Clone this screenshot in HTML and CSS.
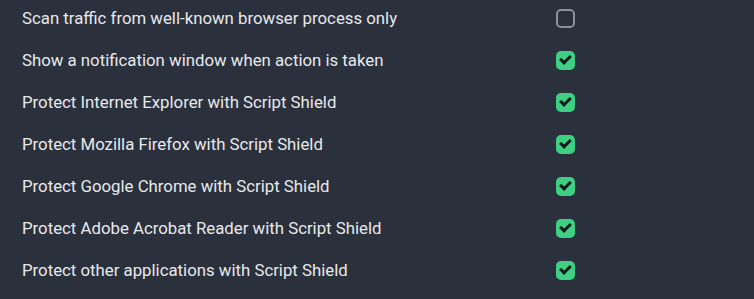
FILE: index.html
```html
<!DOCTYPE html>
<html lang="en">
<head>
    <meta charset="UTF-8">
    <title>Script Shield Settings</title>
    <link rel="stylesheet" href="styles.css">
</head>
<body>
    <ul class="options">
        <li class="option">
            <span class="label">Scan traffic from well-known browser process only</span>
            <span class="check"></span>
        </li>
        <li class="option">
            <span class="label">Show a notification window when action is taken</span>
            <span class="check on"></span>
        </li>
        <li class="option">
            <span class="label">Protect Internet Explorer with Script Shield</span>
            <span class="check on"></span>
        </li>
        <li class="option">
            <span class="label">Protect Mozilla Firefox with Script Shield</span>
            <span class="check on"></span>
        </li>
        <li class="option">
            <span class="label">Protect Google Chrome with Script Shield</span>
            <span class="check on"></span>
        </li>
        <li class="option">
            <span class="label">Protect Adobe Acrobat Reader with Script Shield</span>
            <span class="check on"></span>
        </li>
        <li class="option">
            <span class="label">Protect other applications with Script Shield</span>
            <span class="check on"></span>
        </li>
    </ul>
</body>
</html>
```
FILE: styles.css
```css
/* Dark settings panel */
html, body {
    margin: 0;
    height: 100%;
    background-color: #2a303c;
    font-family: Roboto, 'Liberation Sans', sans-serif;
    color: #e8e9eb;
    overflow: hidden;
}

.options {
    list-style: none;
    margin: -3px 0 0 0;
    padding: 0 0 0 22px;
}

.option {
    display: flex;
    align-items: center;
    height: 42px;
}

.label {
    width: 534px;
    font-size: 16.8px;
}

/* Checkbox */
.check {
    width: 15px;
    height: 15px;
    border: 2px solid #8b909a;
    border-radius: 5px;
    box-sizing: content-box;
    display: flex;
    align-items: center;
    justify-content: center;
}

.check.on {
    background-color: #3ecf83;
    border-color: #3ecf83;
}

.check.on::after {
    content: "";
    width: 8px;
    height: 4px;
    border-left: 3px solid #15191f;
    border-bottom: 3px solid #15191f;
    transform: translateY(-2px) rotate(-45deg);
}
```
